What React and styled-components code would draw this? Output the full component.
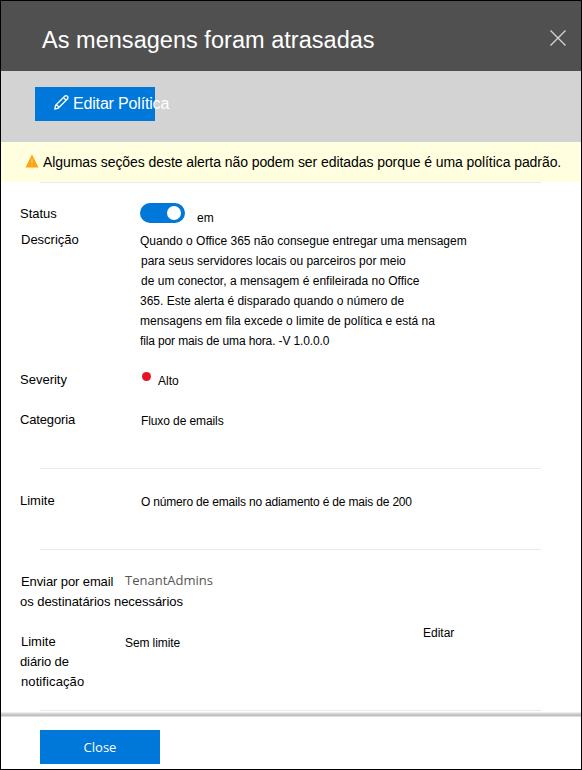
import React from "react";
import styled, { createGlobalStyle } from "styled-components";

const GlobalStyle = createGlobalStyle`
  *, *::before, *::after { box-sizing: border-box; }
  body { margin: 0; background: #fff; }
  button { font: inherit; border: 0; padding: 0; cursor: pointer; }
`;

const Panel = styled.div`
  display: flex;
  flex-direction: column;
  width: 582px;
  height: 770px;
  border: 1px solid #000;
  background: #fff;
  color: #000;
  font-family: "Liberation Sans", Arial, sans-serif;
  font-size: 13px;
  line-height: 20px;
  overflow: hidden;
`;

const Header = styled.header`
  display: flex;
  align-items: flex-start;
  justify-content: space-between;
  flex: none;
  height: 70px;
  padding: 24px 15px 0 41px;
  background: #505050;
  color: #fff;
`;

const Title = styled.h1`
  margin: 0;
  font-size: 23.5px;
  font-weight: 400;
  line-height: 30px;
  letter-spacing: 0.03px;
  white-space: nowrap;
`;

const CloseIconButton = styled.button`
  display: flex;
  margin-top: 5px;
  background: none;
  color: #d6d6d6;
`;

const Toolbar = styled.div`
  flex: none;
  height: 71px;
  padding: 16px 0 0 34px;
  background: #d3d3d3;
`;

const PrimaryButton = styled.button`
  display: flex;
  align-items: center;
  width: 120px;
  height: 34px;
  background: #0078d9;
  color: #fff;
  white-space: nowrap;
`;

const EditButton = styled(PrimaryButton)`
  padding-left: 19px;
  gap: 4px;
  font-size: 16px;
  letter-spacing: -0.17px;

  svg { flex: none; margin-top: -4px; }
`;

const CloseButton = styled(PrimaryButton)`
  justify-content: center;
  font-family: "Open Sans", "Noto Sans", sans-serif;
  font-size: 13px;
  font-weight: 500;
  line-height: 18px;
  padding-bottom: 1px;
`;

const Notice = styled.div`
  display: flex;
  align-items: center;
  flex: none;
  height: 40px;
  padding-left: 24px;
  gap: 4px;
  background: #ffffdf;
  font-size: 14px;
  letter-spacing: -0.07px;
  white-space: nowrap;

  svg { margin-top: -2px; }
`;

const Divider = styled.hr`
  flex: none;
  width: 501px;
  height: 1px;
  margin: 0 0 0 39px;
  border: 0;
  background: #eaeaea;
`;

const Section = styled.section`
  display: flex;
  flex-direction: column;
  flex: none;
  height: ${(p) => p.$height}px;
  padding: ${(p) => p.$top}px 0 0 19px;
`;

const Field = styled.div`
  display: grid;
  grid-template-columns: ${(p) => p.$label || 120}px ${(p) => p.$value || "1fr"} auto;
  align-items: start;
  justify-content: start;
  min-height: ${(p) => p.$height}px;
`;

const Stack = styled.div`
  display: flex;
  flex-direction: column;
`;

const Line = styled.span`
  display: block;
  padding-left: ${(p) => p.$indent || 0}px;
  letter-spacing: ${(p) => p.$track || 0}px;
  white-space: nowrap;
`;

const Value = styled(Stack)`
  padding-top: ${(p) => p.$drop ?? 1}px;
  font-size: 12px;
`;

const EditLink = styled(Value)`
  margin-top: -10px;
`;

const Account = styled.span`
  margin: -2px 0 0 1px;
  color: #555;
  font-family: "Open Sans", "Noto Sans", sans-serif;
  font-size: 13px;
  white-space: nowrap;
`;

const Inline = styled.div`
  display: flex;
  align-items: flex-start;
  gap: ${(p) => p.$gap}px;
  margin-top: ${(p) => p.$lift || 0}px;
`;

const Toggle = styled.button`
  display: flex;
  align-items: center;
  justify-content: flex-end;
  width: 45px;
  height: 20px;
  padding-right: 4px;
  border-radius: 10px;
  background: #0078d9;
`;

const Knob = styled.span`
  width: 14px;
  height: 14px;
  border-radius: 50%;
  background: #fff;
`;

const Dot = styled.span`
  width: 9px;
  height: 9px;
  margin: 2px 0 0 2px;
  border-radius: 50%;
  background: #e81123;
`;

const Footer = styled.footer`
  flex: 1;
  padding: 13px 0 0 39px;
`;

const FooterEdge = styled.div`
  flex: none;
  height: 5px;
  margin-top: 1px;
  background: linear-gradient(#ededed 0 1px, #d8d8d8 1px 2px, #c8c8c8 2px 3px, #bfbfbf 3px 4px, #dedede 4px);
`;

const description = [
  { text: "Quando o Office 365 não consegue entregar uma mensagem", track: 0 },
  { text: "para seus servidores locais ou parceiros por meio", indent: 1, track: 0 },
  { text: "de um conector, a mensagem é enfileirada no Office", indent: 1, track: 0.01 },
  { text: "365. Este alerta é disparado quando o número de", track: 0 },
  { text: "mensagens em fila excede o limite de política e está na", track: 0 },
  { text: "fila por mais de uma hora. -V 1.0.0.0", track: -0.13 },
];

export default function App() {
  return (
    <>
      <GlobalStyle />
      <Panel>
        <Header>
          <Title>As mensagens foram atrasadas</Title>
          <CloseIconButton aria-label="Close panel">
            <svg width="16" height="16" viewBox="0 0 16 16" fill="none" stroke="currentColor" strokeWidth="1.3">
              <path d="M.5 .5l15 15M15.500 .5l-15 15" />
            </svg>
          </CloseIconButton>
        </Header>
        <Toolbar>
          <EditButton>
            <svg width="15" height="15" viewBox="0 0 16 16" fill="none" stroke="currentColor" strokeWidth="1.4" strokeLinejoin="round">
              <path d="M.8 15l1-4.100L11.400 1.400a1.900 1.900 0 0 1 2.900 0 1.900 1.900 0 0 1 0 2.800L4.700 13.900zM1.800 10.900a2.500 2.500 0 0 1 2.900 3M10.100 2.700l2.900 2.900" />
            </svg>
            Editar Política
          </EditButton>
        </Toolbar>
        <Notice>
          <svg width="14" height="14" viewBox="0 0 14 14">
            <path d="M7 .5L13.500 13.500H.5z" fill="#ffa30f" />
            <path d="M7 5v4.500M7 10.700v1.200" stroke="#ffd48c" strokeWidth="1" />
          </svg>
          Algumas seções deste alerta não podem ser editadas porque é uma política padrão.
        </Notice>
        <Divider />
        <Section $height={285} $top={21}>
          <Field $height={26}>
            <Line>Status</Line>
            <Inline $gap={12} $lift={-1}>
              <Toggle role="switch" aria-checked="true" aria-label="Status"><Knob /></Toggle>
              <Value $drop={5}>em</Value>
            </Inline>
          </Field>
          <Field $height={140}>
            <Line $indent={1}>Descrição</Line>
            <Value>
              {description.map((l) => (
                <Line key={l.text} $indent={l.indent} $track={l.track}>{l.text}</Line>
              ))}
            </Value>
          </Field>
          <Field $height={40}>
            <Line>Severity</Line>
            <Inline $gap={7}>
              <Dot />
              <Value><Line>Alto</Line></Value>
            </Inline>
          </Field>
          <Field $height={40}>
            <Line $track={-0.15}>Categoria</Line>
            <Value><Line $indent={1} $track={-0.1}>Fluxo de emails</Line></Value>
          </Field>
        </Section>
        <Divider />
        <Section $height={80} $top={22}>
          <Field>
            <Line>Limite</Line>
            <Value><Line $indent={1} $track={-0.18}>O número de emails no adiamento é de mais de 200</Line></Value>
          </Field>
        </Section>
        <Divider />
        <Section $height={160} $top={22}>
          <Field $label={104} $height={60}>
            <Stack>
              <Line $indent={1} $track={-0.1}>Enviar por email</Line>
              <Line $track={-0.04}>os destinatários necessários</Line>
            </Stack>
            <Account>TenantAdmins</Account>
          </Field>
          <Field $label={105} $value="298px">
            <Stack>
              <Line $indent={1}>Limite</Line>
              <Line $track={-0.12}>diário de</Line>
              <Line $indent={1} $track={0.1}>notificação</Line>
            </Stack>
            <Value><Line $track={-0.1}>Sem limite</Line></Value>
            <EditLink><Line>Editar</Line></EditLink>
          </Field>
        </Section>
        <Divider />
        <FooterEdge />
        <Footer>
          <CloseButton>Close</CloseButton>
        </Footer>
      </Panel>
    </>
  );
}
